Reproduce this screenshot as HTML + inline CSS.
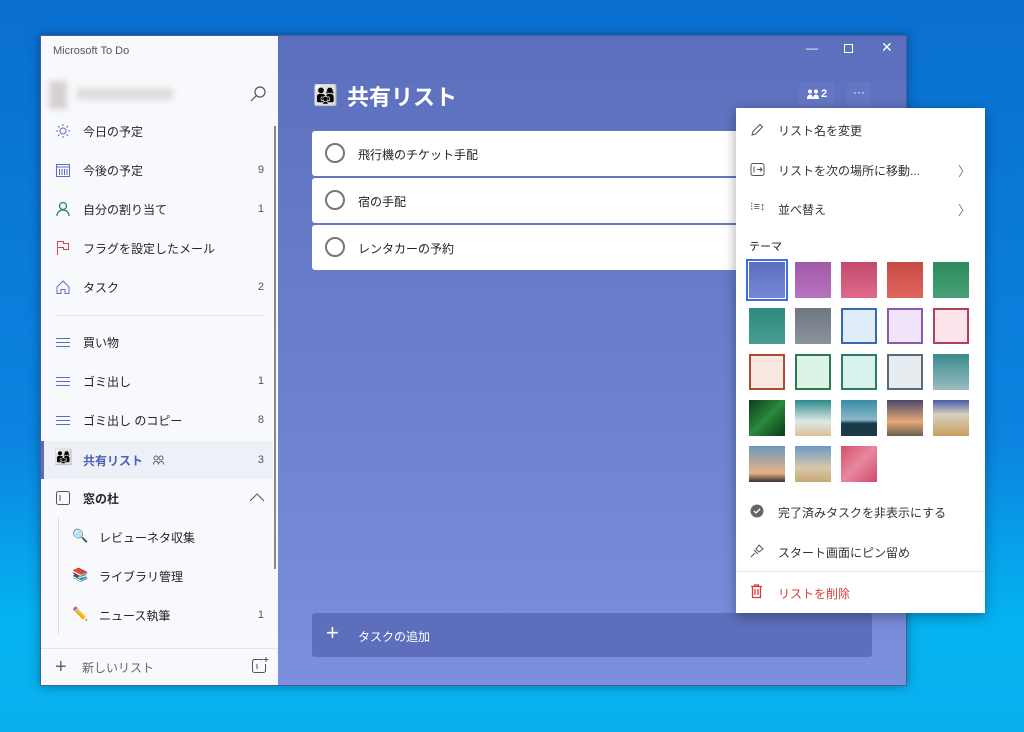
<!DOCTYPE html><html><head><meta charset="utf-8"><style>
*{margin:0;padding:0;box-sizing:border-box}
body{width:1024px;height:732px;overflow:hidden;position:relative;font-family:"Liberation Sans","Noto Sans CJK JP",sans-serif;background:linear-gradient(180deg,#0a6fd0 0%,#0a84e0 60%,#05b3f0 85%,#0ab0ee 100%)}
.abs{position:absolute}
.win{left:40px;top:35px;width:867px;height:651px;border:1px solid #4a5d9a;box-shadow:0 0 10px rgba(0,0,0,.35)}
.side{left:0;top:0;width:237px;height:649px;background:#f8f9fc}
.main{left:237px;top:0;width:628px;height:649px;background:linear-gradient(180deg,#5b6fbc,#7b8fdc)}
.it{position:absolute;left:0;width:237px;height:38px;font-size:12px;color:#252525;display:flex;align-items:center}
.it .ic{position:absolute;left:14px;top:11px;width:16px;height:16px}
.it .t{position:absolute;left:42px}
.it .n{position:absolute;right:14px;color:#555;font-size:11px}
.task{left:312px;width:424px;height:45px;background:#fff;border-radius:3px 0 0 3px;font-size:12px;color:#222}
.task .c{position:absolute;left:13px;top:12px;width:20px;height:20px;border:2px solid #777;border-radius:50%}
.task .t{position:absolute;left:46px;top:15px}
.menu{left:736px;top:108px;width:249px;height:505px;background:#fff;box-shadow:0 3px 12px rgba(0,0,0,.35)}
.mi{position:absolute;left:0;width:249px;height:38px;font-size:12px;color:#333}
.mi .t{position:absolute;left:42px;top:12px}
.mi .ar{position:absolute;right:14px;top:11px;color:#777;font-size:13px}
.sw{position:absolute;width:36px;height:36px}
</style></head><body>
<div class="abs win">
 <div class="abs side">
  <div class="abs" style="left:12px;top:9px;font-size:11px;color:#555">Microsoft To Do</div>
  <div class="abs" style="left:8px;top:45px;width:18px;height:28px;background:#d8d0d0;filter:blur(3px)"></div>
  <div class="abs" style="left:36px;top:52px;width:96px;height:12px;background:#ddd;filter:blur(3px)"></div>
  <svg class="abs" style="left:208px;top:49px" width="18" height="18"><circle cx="11" cy="7" r="5" fill="none" stroke="#555" stroke-width="1.2"/><line x1="7.5" y1="10.5" x2="2" y2="16" stroke="#555" stroke-width="1.2"/></svg>
  <div class="abs" style="left:233px;top:90px;width:2px;height:443px;background:#888"></div>
  <div class="it" style="top:76px"><svg class="ic" viewBox="0 0 16 16"><circle cx="8" cy="8" r="3" fill="none" stroke="#5b6fbc"/><g stroke="#5b6fbc"><line x1="8" y1="1" x2="8" y2="3"/><line x1="8" y1="13" x2="8" y2="15"/><line x1="1" y1="8" x2="3" y2="8"/><line x1="13" y1="8" x2="15" y2="8"/><line x1="3" y1="3" x2="4.5" y2="4.5"/><line x1="11.5" y1="11.5" x2="13" y2="13"/><line x1="13" y1="3" x2="11.5" y2="4.5"/><line x1="3" y1="13" x2="4.5" y2="11.5"/></g></svg><span class="t">今日の予定</span></div>
  <div class="it" style="top:115px"><svg class="ic" viewBox="0 0 16 16"><rect x="1.5" y="2.5" width="13" height="12" fill="none" stroke="#5b6fbc"/><line x1="1.5" y1="5" x2="14.5" y2="5" stroke="#5b6fbc"/><g stroke="#5b6fbc"><line x1="4.5" y1="7" x2="4.5" y2="13"/><line x1="7" y1="7" x2="7" y2="13"/><line x1="9.5" y1="7" x2="9.5" y2="13"/><line x1="12" y1="7" x2="12" y2="13"/></g></svg><span class="t">今後の予定</span><span class="n">9</span></div>
  <div class="it" style="top:154px"><svg class="ic" viewBox="0 0 16 16"><circle cx="8" cy="5" r="3.5" fill="none" stroke="#2e8a5c" stroke-width="1.3"/><path d="M2 15c0-4 3-6 6-6s6 2 6 6" fill="none" stroke="#2e8a5c" stroke-width="1.3"/></svg><span class="t">自分の割り当て</span><span class="n">1</span></div>
  <div class="it" style="top:193px"><svg class="ic" viewBox="0 0 16 16"><path d="M2.5 15V1.5h6v2h5v6h-5v-2h-6" fill="none" stroke="#d04848"/></svg><span class="t">フラグを設定したメール</span></div>
  <div class="it" style="top:232px"><svg class="ic" viewBox="0 0 16 16"><path d="M2 8L8 2l6 6v6.5h-4v-4H6v4H2z" fill="none" stroke="#5b6fbc"/></svg><span class="t">タスク</span><span class="n">2</span></div>
  <div class="abs" style="left:14px;top:279px;width:210px;height:1px;background:#e2e2e2"></div>
  <div class="it" style="top:287px"><svg class="ic" viewBox="0 0 16 16"><g stroke="#5b6fbc"><line x1="1" y1="4.5" x2="15" y2="4.5"/><line x1="1" y1="8.5" x2="15" y2="8.5"/><line x1="1" y1="12.5" x2="15" y2="12.5"/></g></svg><span class="t">買い物</span></div>
  <div class="it" style="top:326px"><svg class="ic" viewBox="0 0 16 16"><g stroke="#5b6fbc"><line x1="1" y1="4.5" x2="15" y2="4.5"/><line x1="1" y1="8.5" x2="15" y2="8.5"/><line x1="1" y1="12.5" x2="15" y2="12.5"/></g></svg><span class="t">ゴミ出し</span><span class="n">1</span></div>
  <div class="it" style="top:365px"><svg class="ic" viewBox="0 0 16 16"><g stroke="#5b6fbc"><line x1="1" y1="4.5" x2="15" y2="4.5"/><line x1="1" y1="8.5" x2="15" y2="8.5"/><line x1="1" y1="12.5" x2="15" y2="12.5"/></g></svg><span class="t">ゴミ出し のコピー</span><span class="n">8</span></div>
  <div class="it" style="top:405px;height:38px;background:#eef0f8;width:232px"><div class="abs" style="left:0;top:0;width:3px;height:38px;background:#5b6fbc"></div><span class="abs" style="left:13px;top:8px;font-size:15px;line-height:18px">👨‍👩‍👧</span><span class="t" style="color:#4e62b4;font-weight:bold">共有リスト</span><svg class="abs" style="left:112px;top:14px" width="11" height="10"><circle cx="3" cy="3" r="2" fill="none" stroke="#666"/><circle cx="8" cy="3" r="2" fill="none" stroke="#666"/><path d="M0.5 9.5c0-2 1-3 2.5-3s2.5 1 2.5 3M5.5 9.5c0-2 1-3 2.5-3s2.5 1 2.5 3" fill="none" stroke="#666"/></svg><span class="n" style="right:9px">3</span></div>
  <div class="it" style="top:443px"><svg class="ic" viewBox="0 0 16 16"><rect x="1.5" y="1.5" width="13" height="13" rx="2" fill="none" stroke="#555"/><line x1="5" y1="5" x2="5" y2="11" stroke="#555"/></svg><span class="t" style="font-weight:bold">窓の杜</span><svg class="abs" style="left:208px;top:14px" width="16" height="10"><path d="M1 8l7-7 7 7" fill="none" stroke="#555"/></svg></div>
  <div class="abs" style="left:17px;top:482px;width:1px;height:116px;background:#ddd"></div>
  <div class="it" style="top:482px"><span class="abs" style="left:31px;top:10px;font-size:13px">🔍</span><span class="t" style="left:58px">レビューネタ収集</span></div>
  <div class="it" style="top:521px"><span class="abs" style="left:31px;top:10px;font-size:13px">📚</span><span class="t" style="left:58px">ライブラリ管理</span></div>
  <div class="it" style="top:560px"><span class="abs" style="left:31px;top:10px;font-size:13px">✏️</span><span class="t" style="left:58px">ニュース執筆</span><span class="n">1</span></div>
  <div class="abs" style="left:0;top:612px;width:237px;height:1px;background:#e4e4e4"></div>
  <div class="abs" style="left:14px;top:623px;font-size:20px;color:#666;line-height:16px;font-weight:200">+</div>
  <div class="abs" style="left:41px;top:623px;font-size:12px;color:#666">新しいリスト</div>
  <svg class="abs" style="left:210px;top:620px" width="18" height="18"><path d="M12 3.5H3.5a2 2 0 0 0-2 2v9a2 2 0 0 0 2 2h9a2 2 0 0 0 2-2V8" fill="none" stroke="#555"/><line x1="6" y1="8" x2="6" y2="13" stroke="#555"/><path d="M15 1v5M12.5 3.5h5" stroke="#555"/></svg>
 </div>
 <div class="abs main">
  <div class="abs" style="left:528px;top:5px;color:#fff;font-size:12px">—</div>
  <div class="abs" style="left:566px;top:8px;width:9px;height:9px;border:1px solid #fff"></div>
  <div class="abs" style="left:603px;top:3px;color:#fff;font-size:14px">✕</div>
  <span class="abs" style="left:35px;top:47px;font-size:20px">👨‍👩‍👧</span>
  <div class="abs" style="left:69px;top:44px;font-size:22px;color:#fff;font-weight:bold">共有リスト</div>
  <div class="abs" style="left:521px;top:46px;width:36px;height:24px;background:#6577c4;border-radius:3px;color:#fff;font-size:11px;font-weight:bold;line-height:24px"><svg class="abs" style="left:8px;top:7px" width="12" height="10"><circle cx="3" cy="2.5" r="2" fill="#fff"/><circle cx="9" cy="2.5" r="2" fill="#fff"/><path d="M0 10c0-3 1.5-4.5 3-4.5s3 1.5 3 4.5zM6 10c0-3 1.5-4.5 3-4.5s3 1.5 3 4.5z" fill="#fff"/></svg><span class="abs" style="left:22px;top:0">2</span></div>
  <div class="abs" style="left:569px;top:46px;width:24px;height:24px;background:#6577c4;border-radius:3px;color:#fff;font-size:12px;line-height:20px;text-align:center">···</div>
  <div class="abs" style="left:34px;top:577px;width:560px;height:44px;background:#5d6fbc;border-radius:3px"><span class="abs" style="left:14px;top:8px;color:#fff;font-size:22px;font-weight:200;line-height:24px">+</span><span class="abs" style="left:46px;top:15px;color:#fff;font-size:12px">タスクの追加</span></div>
 </div>
</div>
<div class="abs task" style="top:131px"><div class="c"></div><span class="t">飛行機のチケット手配</span></div>
<div class="abs task" style="top:178px"><div class="c"></div><span class="t">宿の手配</span></div>
<div class="abs task" style="top:225px"><div class="c"></div><span class="t">レンタカーの予約</span></div>
<div class="abs menu">
 <div class="mi" style="top:2px"><svg class="abs" style="left:14px;top:13px" width="14" height="14"><path d="M2 12l1-3.5L10 1.5l2.5 2.5-7 7z" fill="none" stroke="#555"/></svg><span class="t">リスト名を変更</span></div>
 <div class="mi" style="top:42px"><svg class="abs" style="left:14px;top:12px" width="15" height="15"><rect x="1" y="1.5" width="13" height="12" rx="2" fill="none" stroke="#555"/><line x1="4" y1="4.5" x2="4" y2="10.5" stroke="#555"/><path d="M7 7.5h5M10 5.5l2 2-2 2" fill="none" stroke="#555"/></svg><span class="t">リストを次の場所に移動...</span><span class="ar">〉</span></div>
 <div class="mi" style="top:81px"><span class="abs" style="left:14px;top:11px;font-size:11px;color:#555">⁝≡↕</span><span class="t">並べ替え</span><span class="ar">〉</span></div>
 <div class="abs" style="left:13px;top:130px;font-size:11px;color:#222">テーマ</div>
 <div class="sw" style="left:13px;top:154px;background:linear-gradient(#5b6fbc,#7588d6);outline:2px solid #3a6ee8;outline-offset:1px"></div>
 <div class="sw" style="left:59px;top:154px;background:linear-gradient(#a05aa8,#b772c0)"></div>
 <div class="sw" style="left:105px;top:154px;background:linear-gradient(#c24a6e,#df6a8a)"></div>
 <div class="sw" style="left:151px;top:154px;background:linear-gradient(#c64a45,#e0665c)"></div>
 <div class="sw" style="left:197px;top:154px;background:linear-gradient(#2e8a5c,#48a078)"></div>
 <div class="sw" style="left:13px;top:200px;background:linear-gradient(#2e8a7c,#479e90)"></div>
 <div class="sw" style="left:59px;top:200px;background:linear-gradient(#6e7682,#8a929c)"></div>
 <div class="sw" style="left:105px;top:200px;background:#e0ecf8;border:2px solid #3a68b0"></div>
 <div class="sw" style="left:151px;top:200px;background:#efe4f8;border:2px solid #8a5aa8"></div>
 <div class="sw" style="left:197px;top:200px;background:#fce4ea;border:2px solid #b0405c"></div>
 <div class="sw" style="left:13px;top:246px;background:#f8e8e0;border:2px solid #b04a30"></div>
 <div class="sw" style="left:59px;top:246px;background:#dcf4e8;border:2px solid #2e7a50"></div>
 <div class="sw" style="left:105px;top:246px;background:#d8f2ee;border:2px solid #2a7a6a"></div>
 <div class="sw" style="left:151px;top:246px;background:#e6ecf0;border:2px solid #5a6a78"></div>
 <div class="sw" style="left:197px;top:246px;background:linear-gradient(#3a8a8c,#9abcc0)"></div>
 <div class="sw" style="left:13px;top:292px;background:linear-gradient(135deg,#0c3a1c,#2a8a3a,#0c3a1c)"></div>
 <div class="sw" style="left:59px;top:292px;background:linear-gradient(#2a8a8c,#e0e8e4 60%,#d8c09a)"></div>
 <div class="sw" style="left:105px;top:292px;background:linear-gradient(#3a8aa8,#8ab8c8 55%,#1a3a4a 65%)"></div>
 <div class="sw" style="left:151px;top:292px;background:linear-gradient(#4a4a6a,#e8a878 60%,#6a6050)"></div>
 <div class="sw" style="left:197px;top:292px;background:linear-gradient(#4a5aa8,#d8d0c0 40%,#c8a060)"></div>
 <div class="sw" style="left:13px;top:338px;background:linear-gradient(#6a9ab8,#e8b08a 75%,#3a3030)"></div>
 <div class="sw" style="left:59px;top:338px;background:linear-gradient(#6a9ac8,#d8c8a8 60%,#c8a878)"></div>
 <div class="sw" style="left:105px;top:338px;background:linear-gradient(135deg,#d8506a,#e888a0,#d04868)"></div>
 <div class="mi" style="top:384px"><svg class="abs" style="left:14px;top:12px" width="14" height="14"><circle cx="7" cy="7" r="6.5" fill="#666"/><path d="M4 7l2 2 4-4" fill="none" stroke="#fff" stroke-width="1.3"/></svg><span class="t">完了済みタスクを非表示にする</span></div>
 <div class="mi" style="top:424px"><svg class="abs" style="left:14px;top:12px" width="14" height="14"><path d="M1 13l4-4M4 6l4 4M6 5l3-4 4 4-4 3z" fill="none" stroke="#555"/></svg><span class="t">スタート画面にピン留め</span></div>
 <div class="abs" style="left:0;top:463px;width:249px;height:1px;background:#e6e6e6"></div>
 <div class="mi" style="top:465px;color:#d83b3b"><svg class="abs" style="left:14px;top:11px" width="13" height="15"><path d="M1 2.5h11M4.5 2.5V1h4v1.5M2.5 2.5v11h8v-11M5 5v6M8 5v6" fill="none" stroke="#d83b3b" stroke-width="1.3"/></svg><span class="t">リストを削除</span></div>
</div>
</body></html>
